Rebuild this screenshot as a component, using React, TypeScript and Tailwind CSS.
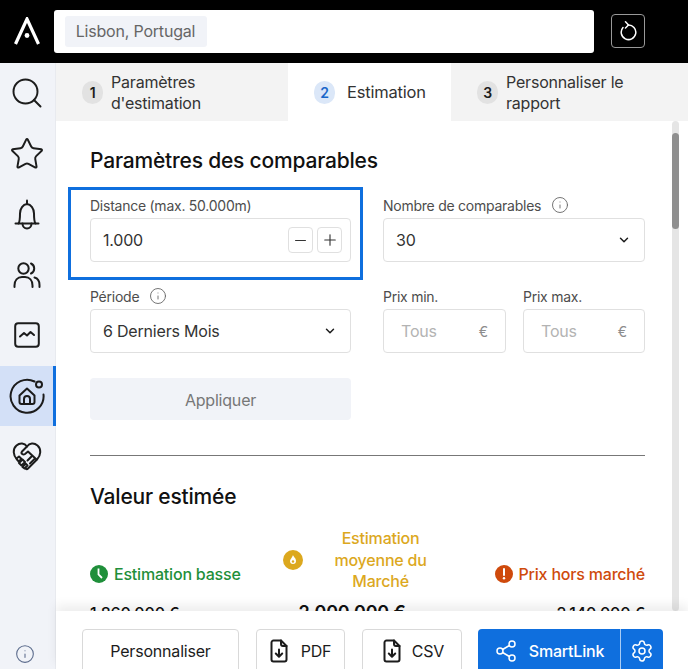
import React from "react";
import { ChevronDown, Minus, Plus, Info, Search, Star, Share2, Settings } from "lucide-react";

const Logo = () => (
  <svg width="26" height="28" viewBox="0 0 26 28" fill="none">
    <path d="M1.500 27 L13 2 L24.500 27" stroke="#fff" strokeWidth="3.200" strokeLinejoin="miter" />
    <circle cx="13" cy="18.500" r="2.400" fill="#fff" />
  </svg>
);

const Reload = () => (
  <svg width="20" height="20" viewBox="0 0 20 20" fill="none" stroke="#fff" strokeWidth="1.500" strokeLinecap="round" strokeLinejoin="round">
    <path d="M5 6.500A7.300 7.300 0 1 0 10 4" />
    <path d="M7.500 0.800L10.500 4 7.500 7" />
  </svg>
);

const BellIcon = () => (
  <svg width="26" height="31" viewBox="0 0 26 31" fill="none" stroke="#1c1c1c" strokeWidth="2" strokeLinecap="round" strokeLinejoin="round">
    <path d="M1.500 24.500h23" />
    <path d="M4.500 24.500c1.500-2 1.500-5 1.500-10 0-5 3-9 7-9.500 4 .5 7 4.500 7 9.500 0 5 0 8 1.500 10" />
    <path d="M13 1.500v3" />
    <path d="M8.500 24.500c0 3 2 5 4.500 5s4.500-2 4.500-5" />
  </svg>
);

const Users = () => (
  <svg width="28" height="28" viewBox="0 0 28 28" fill="none" stroke="#1c1c1c" strokeWidth="2" strokeLinecap="round">
    <circle cx="10.500" cy="7.500" r="5.200" />
    <path d="M1.500 26v-1.500c0-5 3-8.500 7.500-8.500h3c4.500 0 7.500 3.500 7.500 8.500V26" />
    <path d="M18 2.500a5.500 5.500 0 0 1 0 10" />
    <path d="M21.500 16.500c3 .8 5 4 5 7.500v2" />
  </svg>
);
const Chart = () => (
  <svg width="26" height="26" viewBox="0 0 26 26" fill="none" stroke="#1c1c1c" strokeWidth="2" strokeLinecap="round" strokeLinejoin="round">
    <rect x="1.200" y="1.200" width="23.600" height="23.600" rx="3" />
    <path d="M6 14.500l4-3.500 3 2.500 3.500-3.500 3.500 3" />
  </svg>
);
const HomeOrbit = () => (
  <svg width="36" height="36" viewBox="0 0 36 36" fill="none" stroke="#1c1c1c" strokeWidth="2" strokeLinecap="round" strokeLinejoin="round">
    <path d="M25.500 3.500A16.500 16.500 0 1 0 34.500 16.500" />
    <circle cx="30" cy="6.500" r="3" />
    <path d="M10.500 17.500L18 10.500l7.500 7V24a2 2 0 0 1-2 2H12.500a2 2 0 0 1-2-2z" />
    <path d="M15 26v-5a3 3 0 0 1 6 0v5" />
  </svg>
);
const Handshake = () => (
  <svg width="30" height="30" viewBox="0 0 30 30" fill="none" stroke="#1c1c1c" strokeWidth="2" strokeLinecap="round" strokeLinejoin="round">
    <path d="M5 18.500C1 14.500 .5 8 4.500 4.500c3.500-3 8-2.500 10.500 1 2.500-3.500 7-4 10.500-1 4 3.500 3.500 10-.5 14L16 27.500c-.8.8-1.500.8-2.300.2" />
    <path d="M15 5.500l-5 5c-1.500 2 1 4 3 2.500l3-2.500 8.500 8" />
    <path d="M4.500 17.500l2.500-2 2.500 2.500-3 2.500z" />
    <path d="M7 22l3.500-3.500 2.500 2.500-3.500 3.500z" />
    <path d="M10.500 26l3-3.500 2 2-3 3z" />
    <path d="M20 15l-4.500 4.500M22.500 18l-4.500 4.500" />
  </svg>
);
const FileDown = () => (
  <svg width="18" height="24" viewBox="0 0 18 24" fill="none" stroke="#1c1c1c" strokeWidth="2" strokeLinecap="round" strokeLinejoin="round">
    <path d="M11 1.500H3.500A2 2 0 0 0 1.500 3.500v17a2 2 0 0 0 2 2h11a2 2 0 0 0 2-2V7z" />
    <path d="M11 1.500V5a2 2 0 0 0 2 2h3.500" />
    <path d="M9 10.500v7M5.800 14.500L9 17.700l3.200-3.200" />
  </svg>
);

const NavItem = ({ children, active }: { children: React.ReactNode; active?: boolean }) => (
  <div className={`-mr-px flex h-[60.500px] items-center justify-center pr-[3px] ${active ? "bg-[#d3e0f7] shadow-[inset_-3px_0_0_#0f6fde]" : ""}`}>
    {children}
  </div>
);

const Tab = ({ n, label, active, className }: { n: string; label: React.ReactNode; active?: boolean; className: string }) => (
  <div className={`flex items-center ${active ? "gap-[12px] bg-white" : "gap-[8px] bg-[#f3f3f3]"} ${className}`}>
    <span className={`flex h-[23px] w-[21px] shrink-0 items-center justify-center rounded-full text-[14px] font-semibold ${active ? "bg-[#dbe7f8] text-[#1a66c9]" : "bg-[#e2e2e2] text-[#1c1c1c]"}`}>{n}</span>
    <span className={`pt-[2px] leading-[21.500px] text-[#333] ${active ? "text-[16.500px]" : "text-[16px]"}`}>{label}</span>
  </div>
);

const FieldLabel = ({ children, info }: { children: React.ReactNode; info?: boolean }) => (
  <div className="flex h-[18px] items-center gap-[10px] text-[14px] tracking-[-0.25px] text-[#4d4d4d]">
    {children}
    {info && <Info size={18} strokeWidth={1.200} className="text-[#666]" />}
  </div>
);

const boxClass = "mt-[4px] flex items-center rounded-[4px] border border-[#e0e0e0] bg-white";

const Select = ({ value }: { value: string }) => (
  <div className={`${boxClass} h-[44px] justify-between pl-[12px] pr-[13px] text-[16px] text-[#333]`}>
    {value}
    <ChevronDown size={14} strokeWidth={2.500} className="text-[#1c1c1c]" />
  </div>
);

const Price = ({ label }: { label: string }) => (
  <div>
    <FieldLabel>{label}</FieldLabel>
    <div className={`${boxClass} h-[44px] justify-between pl-[17px] pr-[17px] text-[16px] text-[#b3b3b3]`}>
      Tous
      <span className="text-[14px] text-[#8c8c8c]">€</span>
    </div>
  </div>
);

const Step = ({ children }: { children: React.ReactNode }) => (
  <span className="flex h-[26px] w-[25px] items-center justify-center rounded-[4px] border border-[#e0e0e0] text-[#333]">{children}</span>
);

const OutlineBtn = ({ children, className }: { children: React.ReactNode; className: string }) => (
  <div className={`flex h-[44px] items-center justify-center rounded-[4px] border border-[#d9d9d9] bg-white text-[16px] text-[#1c1c1c] ${className}`}>{children}</div>
);

export default function App() {
  return (
    <div className="flex h-[669px] w-[688px] flex-col overflow-hidden bg-white font-['Inter','Liberation_Sans',sans-serif] tracking-[-0.2px]">
      <header className="flex h-[63px] shrink-0 items-center bg-black pb-[1px]">
        <div className="flex w-[54px] shrink-0 justify-center pr-[1px]"><Logo /></div>
        <div className="flex h-[43px] w-[540px] items-center rounded-[3px] bg-white pl-[11px]">
          <span className="flex h-[31px] w-[142px] items-center justify-center rounded-[3px] bg-[#f1f3f8] pr-[1px] text-[16px] text-[#666]">Lisbon, Portugal</span>
        </div>
        <div className="ml-[17px] flex h-[34px] w-[34px] items-center justify-center rounded-[4px] border border-[#999]">
          <Reload />
        </div>
      </header>

      <div className="flex min-h-0 flex-1">
        <aside className="relative flex w-[56px] shrink-0 flex-col border-r border-[#e8eaef] bg-[#f1f3f8]">
          <NavItem><Search size={36} strokeWidth={1.300} className="text-[#1c1c1c]" /></NavItem>
          <NavItem><Star size={36} strokeWidth={1.300} className="text-[#1c1c1c]" /></NavItem>
          <NavItem><BellIcon /></NavItem>
          <NavItem><Users /></NavItem>
          <NavItem><Chart /></NavItem>
          <NavItem active><HomeOrbit /></NavItem>
          <NavItem><Handshake /></NavItem>
          <div className="mt-auto flex justify-center pb-[5px] pr-[6px]">
            <Info size={20} strokeWidth={1.300} className="text-[#5b6b8c]" />
          </div>
        </aside>

        <main className="relative flex min-w-0 flex-1 flex-col">
          <div className="flex h-[58px] shrink-0">
            <Tab n="1" label={<>Paramètres<br />d'estimation</>} className="w-[232px] pl-[26px]" />
            <Tab n="2" label="Estimation" active className="w-[163px] pl-[26px]" />
            <Tab n="3" label={<>Personnaliser le<br />rapport</>} className="flex-1 pl-[26px]" />
          </div>

          <div className="relative min-h-0 flex-1 overflow-hidden pl-[34px] pr-[43px]">
            <div className="absolute right-[9px] top-0 bottom-0 w-[7px] rounded-full bg-[#e5e5e5]">
              <div className="mt-[12px] h-[96px] w-full rounded-full bg-[#8f8f8f]" />
            </div>

            <h2 className="mt-[27px] text-[21px] font-medium leading-[26px] text-[#111]">Paramètres des comparables</h2>

            <div className="mt-[22px] grid grid-cols-[261px_262px] gap-x-[32px] gap-y-[25px]">
              <div className="relative">
                <div className="absolute -left-[22px] -right-[12px] -top-[9px] -bottom-[18px] border-[3px] border-[#0f6fde]" />
                <FieldLabel>Distance (max. 50.000m)</FieldLabel>
                <div className={`${boxClass} h-[44px] justify-between pl-[12px] pr-[8px] text-[16px] text-[#333]`}>
                  1.000
                  <div className="flex gap-[4px]">
                    <Step><Minus size={17} strokeWidth={1.500} /></Step>
                    <Step><Plus size={18} strokeWidth={1.500} /></Step>
                  </div>
                </div>
              </div>
              <div>
                <FieldLabel info>Nombre de comparables</FieldLabel>
                <Select value="30" />
              </div>
              <div>
                <FieldLabel info>Période</FieldLabel>
                <Select value="6 Derniers Mois" />
              </div>
              <div className="grid grid-cols-[123px_122px] gap-x-[17px]">
                <Price label="Prix min." />
                <Price label="Prix max." />
              </div>
            </div>

            <div className="mt-[25px] flex h-[42px] w-[261px] items-center justify-center rounded-[4px] bg-[#f1f3f8] pt-[1px] text-[16px] text-[#777]">Appliquer</div>

            <div className="mt-[35px] h-px bg-[#777]" />

            <h2 className="mt-[28px] text-[21px] font-medium leading-[26px] text-[#111]">Valeur estimée</h2>

            <div className="mt-[18px] grid grid-cols-[auto_auto_auto] items-end justify-between">
              <div className="mb-[8px] flex h-[22px] items-center gap-[6px] text-[16px] font-medium text-[#1f8f3a]">
                <svg width="18" height="18" viewBox="0 0 18 18"><circle cx="9" cy="9" r="9" fill="#1f8f3a" /><path d="M8.500 3.500V9.500L12 13" stroke="#fff" strokeWidth="1.800" fill="none" /></svg>
                Estimation basse
              </div>
              <div className="mr-[22px] flex items-center gap-[28px]">
                <svg width="20" height="20" viewBox="0 0 20 20"><circle cx="10" cy="10" r="10" fill="#dca81e" /><path d="M10 5c.5 2 3 3 3 6a3 3 0 0 1-6 0c0-2 2-3 3-6z" fill="#fff" /><circle cx="10" cy="11.500" r="1.200" fill="#dca81e" /></svg>
                <div className="w-[100px] text-center text-[16px] font-medium leading-[21.500px] text-[#dca81e]">Estimation moyenne du Marché</div>
              </div>
              <div className="mb-[8px] flex h-[22px] items-center gap-[6px] text-[16px] font-medium text-[#cf4a0c]">
                <svg width="18" height="18" viewBox="0 0 18 18"><circle cx="9" cy="9" r="9" fill="#cf4a0c" /><path d="M9 4v6" stroke="#fff" strokeWidth="2" strokeLinecap="round" /><circle cx="9" cy="13.300" r="1.200" fill="#fff" /></svg>
                Prix hors marché
              </div>
            </div>

            <div className="mt-[10px] grid grid-cols-[auto_auto_auto] items-start justify-between">
              <span className="text-[16px] font-medium leading-[20px] text-[#111]">1.860.000 €</span>
              <span className="mr-[32px] text-[18px] font-semibold leading-[20px] text-[#111]">2.000.000 €</span>
              <span className="text-[16px] font-medium leading-[20px] text-[#111]">2.140.000 €</span>
            </div>
          </div>

          <footer className="z-10 flex h-[58px] shrink-0 overflow-hidden bg-white pl-[26px] pt-[18px] shadow-[0_-6px_10px_rgba(0,0,0,0.07)]">
            <OutlineBtn className="w-[157px]">Personnaliser</OutlineBtn>
            <OutlineBtn className="ml-[17px] w-[89px] gap-[13px]"><FileDown />PDF</OutlineBtn>
            <OutlineBtn className="ml-[17px] w-[100px] gap-[11px] pl-[3px]"><FileDown />CSV</OutlineBtn>
            <div className="ml-[16px] flex h-[44px] w-[185px] rounded-[4px] bg-[#0f6fde] text-[16px] font-medium text-white">
              <div className="flex flex-1 items-center justify-center gap-[11px] border-r border-[#a8ccf5]">
                <Share2 size={24} strokeWidth={1.500} />SmartLink
              </div>
              <div className="flex w-[42px] items-center justify-center"><Settings size={24} strokeWidth={1.500} /></div>
            </div>
          </footer>
        </main>
      </div>
    </div>
  );
}
